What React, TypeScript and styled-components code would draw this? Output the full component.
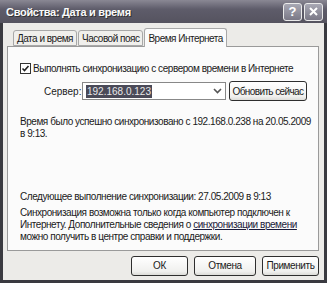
import React from 'react';
import styled, { createGlobalStyle } from 'styled-components';

const GlobalStyle = createGlobalStyle`
  html, body {
    margin: 0;
    padding: 0;
    background: #2a2a2e;
  }
  body {
    font-family: "Liberation Sans", "DejaVu Sans", sans-serif;
    font-size: 10px;
    color: #1a1a1a;
  }
`;

const Window = styled.div`
  width: 327px;
  height: 283px;
  box-sizing: border-box;
  background: #3a3a40;
  padding: 0 3px 3px 3px;
  display: flex;
  flex-direction: column;
`;

const TitleBar = styled.div`
  height: 23px;
  margin: 0 -3px;
  padding: 0 4px 0 6px;
  display: flex;
  align-items: center;
  justify-content: space-between;
  background: linear-gradient(#8a8894, #5e5c6a 40%, #55535f);
`;

const Title = styled.span`
  color: #fafafa;
  font-weight: bold;
  font-size: 11px;
  letter-spacing: -0.3px;
  text-shadow: 1px 1px 0 #333;
`;

const TitleButtons = styled.div`
  display: flex;
  gap: 2px;
`;

const TitleButton = styled.div`
  width: 19px;
  height: 18px;
  box-sizing: border-box;
  border: 1px solid #eaeaea;
  border-radius: 3px;
  background: linear-gradient(#a8a8b4, #7a7886);
  color: #fff;
  font-weight: bold;
  font-size: 13px;
  display: flex;
  align-items: center;
  justify-content: center;
`;

const Body = styled.div`
  flex: 1;
  background: #ecebe8;
  padding: 4px 5px 0 4px;
  display: flex;
  flex-direction: column;
`;

const Tabs = styled.div`
  display: flex;
  align-items: flex-end;
  padding-left: 6px;
  height: 19px;
`;

const Tab = styled.div<{ $active?: boolean }>`
  height: ${({ $active }) => ($active ? '19px' : '16px')};
  box-sizing: border-box;
  padding: 0 3px;
  display: flex;
  align-items: center;
  border: 1px solid #a8a8a8;
  border-bottom: ${({ $active }) => ($active ? 'none' : '1px solid #a8a8a8')};
  border-radius: 3px 3px 0 0;
  background: ${({ $active }) => ($active ? '#fbfbfb' : '#f0efec')};
  margin-right: 1px;
  position: relative;
  z-index: ${({ $active }) => ($active ? 1 : 0)};
  margin-bottom: ${({ $active }) => ($active ? '-1px' : '0')};
  letter-spacing: -0.5px;
`;

const Panel = styled.div`
  height: 205px;
  box-sizing: border-box;
  border: 1px solid #9a9a9a;
  background: #fbfbfb;
  padding: 16px 10px 0 12px;
  display: flex;
  flex-direction: column;
  letter-spacing: -0.45px;
`;

const CheckRow = styled.label`
  display: flex;
  align-items: center;
  gap: 2px;
  white-space: nowrap;
`;

const CheckBox = styled.span`
  width: 11px;
  height: 11px;
  box-sizing: border-box;
  border: 1px solid #333;
  background: #fff;
  display: flex;
  align-items: center;
  justify-content: center;
`;

const ServerRow = styled.div`
  display: flex;
  align-items: center;
  margin-top: 7px;
  padding-left: 24px;
`;

const Label = styled.span`
  width: 38px;
  letter-spacing: 0;
`;

const Combo = styled.div`
  width: 144px;
  height: 18px;
  box-sizing: border-box;
  border: 1px solid #888;
  background: #fff;
  display: flex;
  align-items: center;
  padding-left: 3px;
`;

const Selected = styled.span`
  background: #4a4a58;
  color: #e8e8e8;
  padding: 0 1px;
  line-height: 13px;
  letter-spacing: 0;
`;

const ComboArrow = styled.span`
  margin-left: auto;
  width: 16px;
  height: 16px;
  display: flex;
  align-items: center;
  justify-content: center;
`;

const Button = styled.button<{ $width?: number }>`
  width: ${({ $width }) => $width ?? 74}px;
  height: 20px;
  box-sizing: border-box;
  border: 1px solid #2e2e2e;
  border-radius: 3px;
  background: linear-gradient(#ffffff, #f0f0ee 80%, #dcdcd8);
  font-family: inherit;
  font-size: 10px;
  letter-spacing: -0.4px;
  color: #1a1a1a;
  padding: 0;
  white-space: nowrap;
`;

const SyncButton = styled(Button)`
  margin-left: 3px;
  letter-spacing: -0.6px;
`;

const Para = styled.p<{ $top: number }>`
  margin: ${({ $top }) => $top}px 0 0 0;
  line-height: 12px;
  white-space: nowrap;
`;

const HelpLink = styled.span`
  color: #1a1a3a;
  text-decoration: underline;
`;

const Footer = styled.div`
  flex: 1;
  display: flex;
  justify-content: flex-end;
  align-items: center;
  gap: 6px;
  padding-right: 0;
`;

export default function App() {
  return (
    <>
      <GlobalStyle />
      <Window>
        <TitleBar>
          <Title>Свойства: Дата и время</Title>
          <TitleButtons>
            <TitleButton>?</TitleButton>
            <TitleButton>
              <svg width="11" height="11" viewBox="0 0 11 11">
                <path d="M2 2 L9 9 M9 2 L2 9" stroke="#fff" strokeWidth="2" />
              </svg>
            </TitleButton>
          </TitleButtons>
        </TitleBar>
        <Body>
          <Tabs>
            <Tab>Дата и время</Tab>
            <Tab>Часовой пояс</Tab>
            <Tab $active>Время Интернета</Tab>
          </Tabs>
          <Panel>
            <CheckRow>
              <CheckBox>
                <svg width="9" height="9" viewBox="0 0 9 9">
                  <path d="M1.5 4.5 L3.5 6.5 L7.5 2" stroke="#222" strokeWidth="1.6" fill="none" />
                </svg>
              </CheckBox>
              Выполнять синхронизацию с сервером времени в Интернете
            </CheckRow>
            <ServerRow>
              <Label>Сервер:</Label>
              <Combo>
                <Selected>192.168.0.123</Selected>
                <ComboArrow>
                  <svg width="9" height="6" viewBox="0 0 9 6">
                    <path d="M1 1 L4.5 4.5 L8 1" stroke="#555" strokeWidth="1.6" fill="none" />
                  </svg>
                </ComboArrow>
              </Combo>
              <SyncButton $width={78}>Обновить сейчас</SyncButton>
            </ServerRow>
            <Para $top={15}>
              Время было успешно синхронизовано с 192.168.0.238 на 20.05.2009
              <br />в 9:13.
            </Para>
            <Para $top={51}>Следующее выполнение синхронизации: 27.05.2009 в 9:13</Para>
            <Para $top={4}>
              Синхронизация возможна только когда компьютер подключен к
              <br />
              Интернету. Дополнительные сведения о <HelpLink>синхронизации времени</HelpLink>
              <br />
              можно получить в центре справки и поддержки.
            </Para>
          </Panel>
          <Footer>
            <Button $width={57}>ОК</Button>
            <Button $width={62}>Отмена</Button>
            <Button $width={57}>Применить</Button>
          </Footer>
        </Body>
      </Window>
    </>
  );
}
